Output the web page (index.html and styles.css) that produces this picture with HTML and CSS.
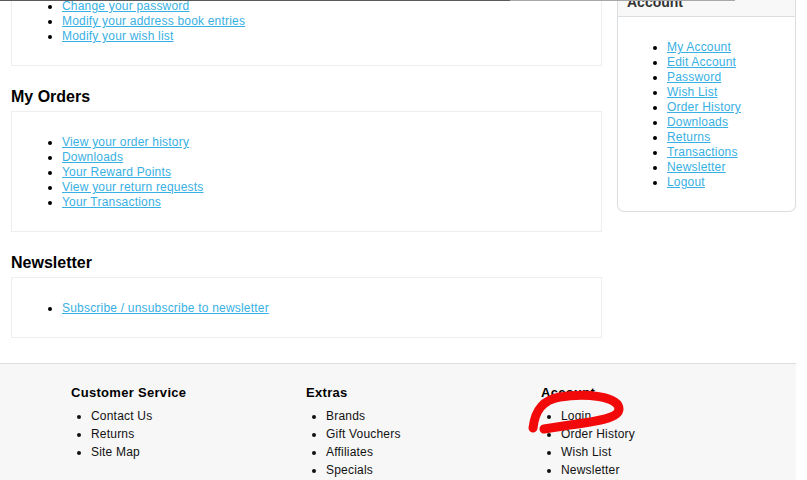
FILE: index.html
```html
<!DOCTYPE html>
<html lang="en">
<head>
    <meta charset="UTF-8">
    <meta name="viewport" content="width=device-width, initial-scale=1.0">
    <title>My Account</title>
    <link rel="stylesheet" href="styles.css">
</head>
<body>
    <div class="edge"></div>

    <div class="page">
        <div class="columns">
            <div class="main">
                <div class="content">
                    <ul>
                        <li><a href="#">Edit your account information</a></li>
                        <li><a href="#">Change your password</a></li>
                        <li><a href="#">Modify your address book entries</a></li>
                        <li><a href="#">Modify your wish list</a></li>
                    </ul>
                </div>

                <h2>My Orders</h2>
                <div class="content">
                    <ul>
                        <li><a href="#">View your order history</a></li>
                        <li><a href="#">Downloads</a></li>
                        <li><a href="#">Your Reward Points</a></li>
                        <li><a href="#">View your return requests</a></li>
                        <li><a href="#">Your Transactions</a></li>
                    </ul>
                </div>

                <h2>Newsletter</h2>
                <div class="content">
                    <ul>
                        <li><a href="#">Subscribe / unsubscribe to newsletter</a></li>
                    </ul>
                </div>
            </div>

            <div class="sidebar">
                <div class="box-heading">Account</div>
                <div class="box-content">
                    <ul>
                        <li><a href="#">My Account</a></li>
                        <li><a href="#">Edit Account</a></li>
                        <li><a href="#">Password</a></li>
                        <li><a href="#">Wish List</a></li>
                        <li><a href="#">Order History</a></li>
                        <li><a href="#">Downloads</a></li>
                        <li><a href="#">Returns</a></li>
                        <li><a href="#">Transactions</a></li>
                        <li><a href="#">Newsletter</a></li>
                        <li><a href="#">Logout</a></li>
                    </ul>
                </div>
            </div>
        </div>

        <div class="footer">
            <div class="column">
                <h3>Customer Service</h3>
                <ul>
                    <li>Contact Us</li>
                    <li>Returns</li>
                    <li>Site Map</li>
                </ul>
            </div>
            <div class="column">
                <h3>Extras</h3>
                <ul>
                    <li>Brands</li>
                    <li>Gift Vouchers</li>
                    <li>Affiliates</li>
                    <li>Specials</li>
                </ul>
            </div>
            <div class="column">
                <h3>Account</h3>
                <ul>
                    <li>Login</li>
                    <li>Order History</li>
                    <li>Wish List</li>
                    <li>Newsletter</li>
                </ul>
            </div>

            <!-- hand-drawn marker around "Login" -->
            <svg class="scribble" viewBox="0 363 796 117" width="796" height="117">
                <path d="M533 427 C535 410 542 399 560 396 C585 392 619 395 619 408 C619 418 592 421 570 424 L544 428"
                      fill="none" stroke="#f20a0a" stroke-width="9" stroke-linecap="round" stroke-linejoin="round"/>
            </svg>
        </div>
    </div>
</body>
</html>
```

FILE: styles.css
```css
body {
    margin: 0;
    background: #fff;
    font-family: "Liberation Sans", Arial, sans-serif;
    font-size: 12px;
    letter-spacing: 0.2px;
    color: #000;
}
a {
    color: #38B0E3;
}
ul {
    margin: 13px 0 11px;
    padding-left: 40px;
}
li {
    line-height: 15px;
}
.edge {
    position: fixed;
    top: 0;
    left: 0;
    width: 807px;
    height: 1px;
    background: linear-gradient(to right, #5a5a5a 0, #5a5a5a 510px, #a8a8a8 510px, #a8a8a8 735px, transparent 735px);
    z-index: 5;
}
.page {
    width: 796px;
}
.columns {
    display: flex;
    gap: 15px;
    padding-left: 11px;
    margin-top: -40px;
}
.main {
    width: 591px;
}
.content {
    padding: 10px;
    margin-bottom: 20px;
    border: 1px solid #eee;
}
h2 {
    margin: 0 0 4px;
    padding-top: 1px;
    font-size: 16px;
    line-height: 20px;
    letter-spacing: 0;
    color: #000;
}
.sidebar {
    width: 179px;
    margin-top: 26px;
}
.box-heading {
    border: 1px solid #dbdee1;
    border-radius: 7px 7px 0 0;
    padding: 8px 10px 7px 9px;
    font-size: 14px;
    font-weight: bold;
    line-height: 14px;
    letter-spacing: 0;
    color: #333;
    background: #f8f8f8;
}
.box-content {
    border: 1px solid #dbdee1;
    border-top: none;
    border-radius: 0 0 7px 7px;
    padding: 10px 10px 10px 9px;
}
.footer {
    position: relative;
    display: flex;
    margin-top: 5px;
    padding: 21px 0 0 71px;
    min-height: 140px;
    background: #f7f7f7;
    border-top: 1px solid #dedede;
}
.column {
    width: 235px;
}
.column h3 {
    margin: 0 0 6px;
    font-size: 13px;
    letter-spacing: 0.3px;
    line-height: 16px;
    color: #000;
}
.column ul {
    margin: 0;
    padding-left: 20px;
}
.column li {
    line-height: 18px;
    color: #111;
}
.scribble {
    position: absolute;
    top: 0;
    left: 0;
}
```
